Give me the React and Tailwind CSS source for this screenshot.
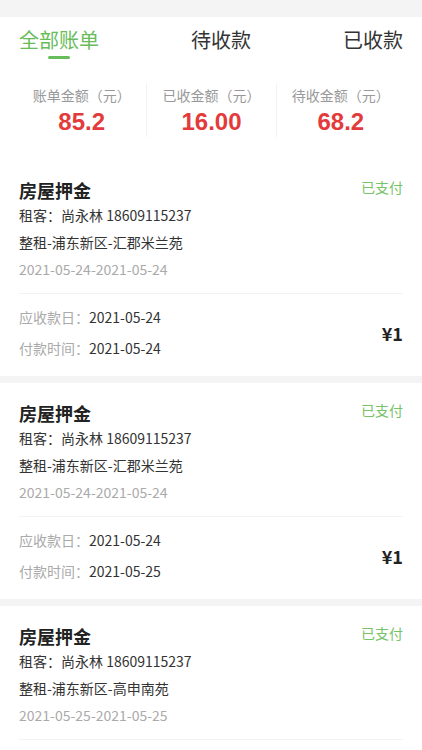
import React, { useState } from 'react';

const FONT = { fontFamily: '"Noto Sans CJK SC", "Noto Sans", "Liberation Sans", sans-serif' };

const bills = [
  { tenant: '尚永林 18609115237', house: '整租-浦东新区-汇郡米兰苑', range: '2021-05-24-2021-05-24', due: '2021-05-24', paid: '2021-05-24', amount: '¥1' },
  { tenant: '尚永林 18609115237', house: '整租-浦东新区-汇郡米兰苑', range: '2021-05-24-2021-05-24', due: '2021-05-24', paid: '2021-05-25', amount: '¥1' },
  { tenant: '尚永林 18609115237', house: '整租-浦东新区-高申南苑', range: '2021-05-25-2021-05-25', due: '2021-05-25', paid: '2021-05-25', amount: '¥1' },
];

const tabs = ['全部账单', '待收款', '已收款'];

const summary = [
  { label: '账单金额（元）', value: '85.2' },
  { label: '已收金额（元）', value: '16.00' },
  { label: '待收金额（元）', value: '68.2' },
];

const BillCard = ({ bill }) => (
  <div className="bg-white px-[19px] pt-[17px]">
    <div className="flex items-start justify-between">
      <h3 className="mt-px text-[18px] leading-[24px] font-bold text-[#222]">房屋押金</h3>
      <span className="text-[14px] leading-[20px] text-[#76c36a]">已支付</span>
    </div>
    <div className="text-[14px] leading-[27px] text-[#333]">
      <p>租客：{bill.tenant}</p>
      <p>{bill.house}</p>
      <p className="text-[#aaa]">{bill.range}</p>
    </div>
    <div className="mt-[10px] border-t border-[#f2f2f2] pt-[8px] pb-[12px] flex items-center justify-between">
      <div className="text-[14px] leading-[31px]">
        <p><span className="text-[#aaa]">应收款日：</span><span className="text-[#333]">{bill.due}</span></p>
        <p><span className="text-[#aaa]">付款时间：</span><span className="text-[#333]">{bill.paid}</span></p>
      </div>
      <span className="text-[18px] font-bold text-[#222]">{bill.amount}</span>
    </div>
  </div>
);

const App = () => {
  const [active, setActive] = useState(0);

  return (
    <div className="w-[422px] bg-white" style={FONT}>
      {/* nav bar, mostly scrolled out of view */}
      <div className="h-[17px] overflow-hidden bg-[#f4f4f4]">
        <div className="relative -mt-[31px] h-[44px] flex items-center justify-center">
          <span className="absolute left-[20px] text-[20px] text-[#333]">‹</span>
          <span className="text-[17px] text-[#333]">租房账单</span>
        </div>
      </div>

      {/* tabs */}
      <div className="h-[45px] flex justify-between px-[19px]">
        {tabs.map((t, i) => (
          <button
            key={t}
            onClick={() => setActive(i)}
            className="flex flex-col items-center pt-[13px]"
          >
            <span className={`text-[20px] leading-[20px] ${active === i ? 'text-[#68bd5a]' : 'text-[#333]'}`}>{t}</span>
            {active === i && <span className="mt-[6px] h-[3px] w-[22px] rounded-full bg-[#68bd5a]" />}
          </button>
        ))}
      </div>

      {/* summary */}
      <div className="grid grid-cols-3 px-[17px] pt-[21px] pb-[23px]">
        {summary.map((s, i) => (
          <div key={s.label} className={`h-[54px] flex flex-col items-center pt-[2px] ${i > 0 ? 'border-l border-[#f3f3f3]' : ''}`}>
            <span className="text-[14px] leading-[20px] text-[#999]">{s.label}</span>
            <span className="mt-[3px] text-[24px] leading-[28px] font-semibold text-[#e33b3b]" style={{ fontFamily: '"Liberation Sans", sans-serif' }}>{s.value}</span>
          </div>
        ))}
      </div>

      {/* bill list */}
      <div className="flex flex-col gap-[7px] bg-[#f4f4f4]">
        {bills.map((b, i) => (
          <BillCard key={i} bill={b} />
        ))}
      </div>
    </div>
  );
};

export default App;
